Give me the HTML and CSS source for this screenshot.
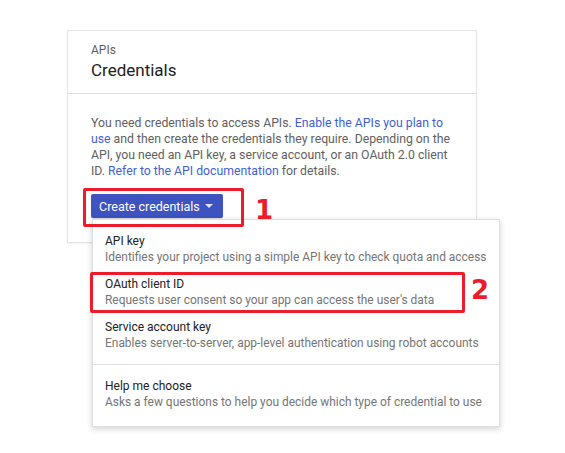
FILE: index.html
```html
<!DOCTYPE html>
<html>
<head>
<meta charset="utf-8">
<link rel="stylesheet" href="styles.css">
</head>
<body>
<div class="stage">
  <div class="card">
    <div class="card-head">
      <div class="eyebrow">APIs</div>
      <div class="title">Credentials</div>
    </div>
    <div class="card-body">
      <p class="intro">You need credentials to access APIs. <a href="#">Enable the APIs you plan to use</a> and then create the credentials they require. Depending on the API, you need an API key, a service account, or an OAuth 2.0 client ID. <a href="#">Refer to the API documentation</a> for details.</p>
      <button class="btn">Create credentials <span class="caret"></span></button>
    </div>
  </div>

  <div class="menu">
    <div class="menu-section">
      <div class="item"><div class="item-title">API key</div><div class="item-desc">Identifies your project using a simple API key to check quota and access</div></div>
      <div class="item"><div class="item-title">OAuth client ID</div><div class="item-desc">Requests user consent so your app can access the user's data</div></div>
      <div class="item"><div class="item-title">Service account key</div><div class="item-desc">Enables server-to-server, app-level authentication using robot accounts</div></div>
    </div>
    <div class="menu-section last">
      <div class="item"><div class="item-title">Help me choose</div><div class="item-desc">Asks a few questions to help you decide which type of credential to use</div></div>
    </div>
  </div>

  <div class="mark mark-1"></div>
  <div class="num num-1">1</div>
  <div class="mark mark-2"></div>
  <div class="num num-2">2</div>
</div>
</body>
</html>
```

FILE: styles.css
```css
* { box-sizing: border-box; }
html, body { margin: 0; padding: 0; background: #fff; }
body { font-family: Roboto, "Noto Sans", Arial, sans-serif; color: #212121; }

.stage { position: relative; width: 565px; height: 453px; padding: 30px 0 0 67px; }

.card {
  width: 410px;
  border: 1px solid #e6e6e6;
  box-shadow: 0 1px 2px rgba(0,0,0,0.06);
  background: #fff;
}
.card-head { padding: 11px 23px 11px; border-bottom: 1px solid #e0e0e0; }
.eyebrow { font-size: 12px; line-height: 16px; color: #616161; }
.title { font-size: 17px; line-height: 24px; color: #212121; }

.card-body { padding: 21px 20px 24px 23px; }
.intro { margin: 0; font-size: 12.25px; line-height: 16px; color: #616161; }
.intro a { color: #3f5fd6; text-decoration: none; }

.btn {
  margin-top: 15px;
  height: 24px;
  width: 132px;
  padding: 0 8px;
  border: 0;
  border-radius: 2px;
  background: #3e52c0;
  color: #fff;
  font-family: inherit;
  font-size: 12.5px;
  display: flex;
  align-items: center;
  justify-content: space-between;
  box-shadow: 0 1px 1px rgba(0,0,0,0.15);
}
.caret {
  width: 0; height: 0;
  border-left: 4px solid transparent;
  border-right: 4px solid transparent;
  border-top: 4px solid #dfe3f5;
  margin-right: 2px;
}

.menu {
  position: absolute;
  left: 92px;
  top: 219px;
  width: 408px;
  background: #fff;
  border: 1px solid #e0e0e0;
  box-shadow: 0 2px 6px rgba(0,0,0,0.18);
}
.menu-section { padding: 7px 0 8px; }
.menu-section + .menu-section { border-top: 1px solid #e0e0e0; padding: 7px 0 11px; }
.item { padding: 6px 12px 5px; height: 43px; white-space: nowrap; }
.item-title { font-size: 12px; line-height: 16px; color: #212121; }
.item-desc { font-size: 11.95px; line-height: 16px; color: #757575; }

.mark {
  position: absolute;
  border: 3px solid #ec1c2a;
  border-radius: 2px;
}
.mark-1 { left: 83px; top: 188px; width: 161px; height: 39px; }
.mark-2 { left: 90px; top: 272px; width: 375px; height: 41px; }
.num {
  position: absolute;
  font-family: "DejaVu Sans", Arial, sans-serif;
  font-weight: bold;
  font-size: 26px;
  line-height: 26px;
  color: #ec1c2a;
}
.num-1 { left: 255px; top: 197px; }
.num-2 { left: 471px; top: 277px; }
```
